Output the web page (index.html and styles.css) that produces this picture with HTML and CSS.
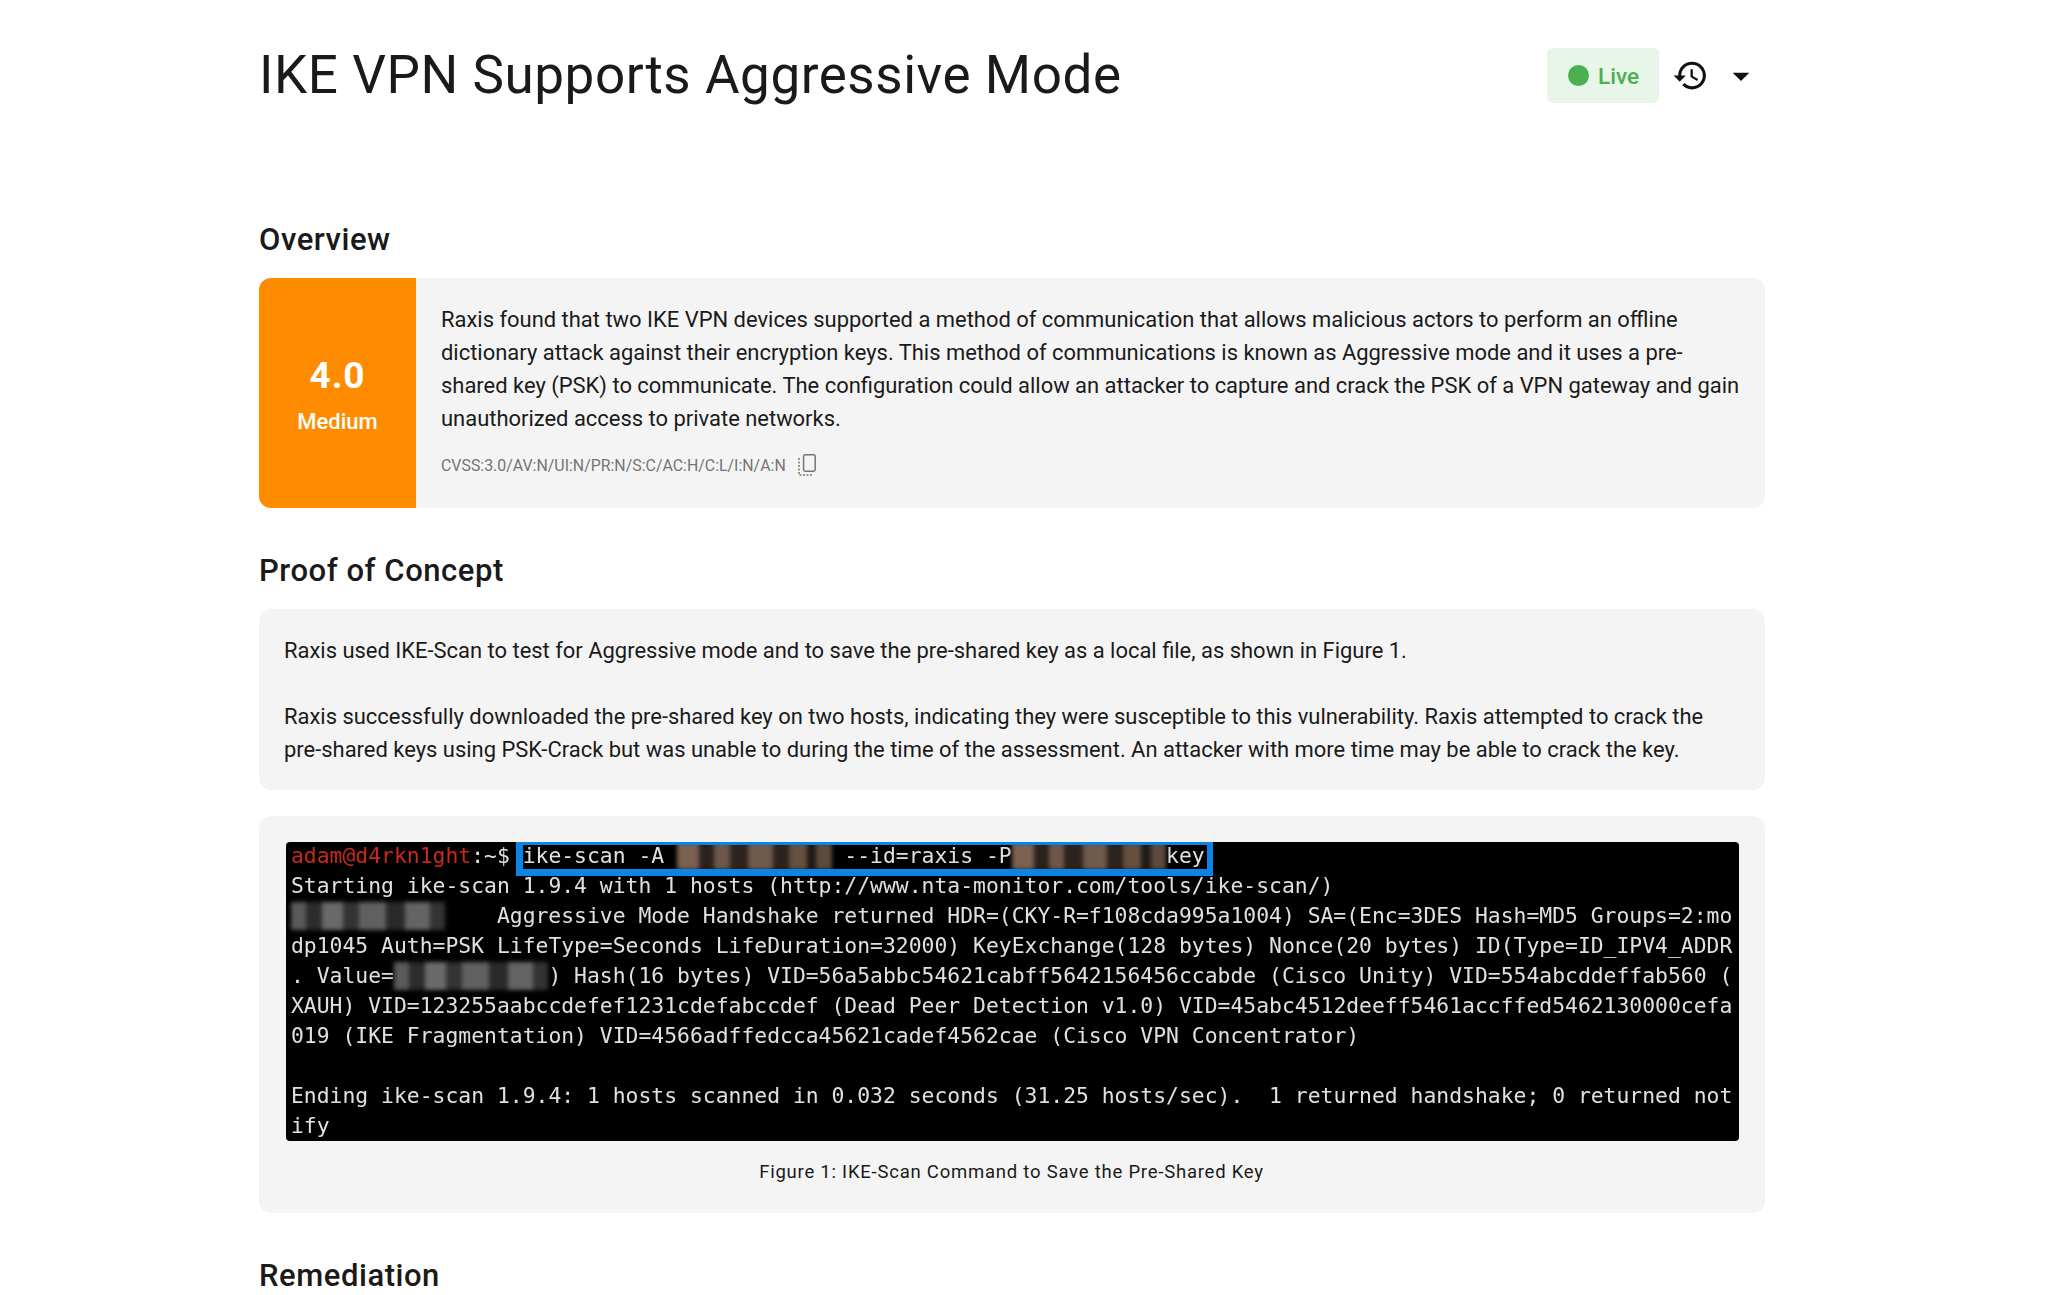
FILE: index.html
```html
<!DOCTYPE html>
<html lang="en">
<head>
<meta charset="utf-8">
<title>IKE VPN Supports Aggressive Mode</title>
<link rel="stylesheet" href="styles.css">
</head>
<body>
<main class="page">
  <header class="title-row">
    <h1 class="title">IKE VPN Supports Aggressive Mode</h1>
    <div class="actions">
      <div class="live"><span class="live-dot"></span>Live</div>
      <svg class="history" viewBox="0 0 24 24" aria-hidden="true"><path d="M13 3c-4.97 0-9 4.03-9 9H1l3.89 3.89.07.14L9 12H6c0-3.87 3.13-7 7-7s7 3.13 7 7-3.13 7-7 7c-1.93 0-3.68-.79-4.94-2.06l-1.42 1.42C8.27 19.99 10.51 21 13 21c4.97 0 9-4.03 9-9s-4.03-9-9-9zm-1 5v5l4.28 2.54.72-1.21-3.5-2.08V8H12z"/></svg>
      <svg class="caret" viewBox="0 0 24 24" aria-hidden="true"><path d="M7 10l5 5 5-5z"/></svg>
    </div>
  </header>

  <h2 class="heading heading-first">Overview</h2>
  <section class="card overview">
    <div class="score">
      <div class="score-value">4.0</div>
      <div class="score-label">Medium</div>
    </div>
    <div class="overview-body">
      <p class="text">Raxis found that two IKE VPN devices supported a method of communication that allows malicious actors to perform an offline dictionary attack against their encryption keys. This method of communications is known as Aggressive mode and it uses a pre-shared key (PSK) to communicate. The configuration could allow an attacker to capture and crack the PSK of a VPN gateway and gain unauthorized access to private networks.</p>
      <div class="cvss">
        <span>CVSS:3.0/AV:N/UI:N/PR:N/S:C/AC:H/C:L/I:N/A:N</span>
        <svg class="copy" viewBox="0 0 18 22" aria-hidden="true">
          <rect x="5.6" y="0.8" width="11.6" height="16.4" rx="1.6"/>
          <path class="dots" d="M1 4v17h14"/>
        </svg>
      </div>
    </div>
  </section>

  <h2 class="heading">Proof of Concept</h2>
  <section class="card poc">
    <p class="text">Raxis used IKE-Scan to test for Aggressive mode and to save the pre-shared key as a local file, as shown in Figure 1.</p>
    <p class="text para">Raxis successfully downloaded the pre-shared key on two hosts, indicating they were susceptible to this vulnerability. Raxis attempted to crack the pre-shared keys using PSK-Crack but was unable to during the time of the assessment. An attacker with more time may be able to crack the key.</p>
  </section>

  <section class="card figure">
    <div class="terminal">
      <div class="term-text">
<div class="line"><span class="prompt">adam@d4rkn1ght</span>:~$ ike-scan -A <span class="redact redact-warm"></span> --id=raxis -P<span class="redact redact-warm"></span>key</div>
<div class="line">Starting ike-scan 1.9.4 with 1 hosts (http://www.nta-monitor.com/tools/ike-scan/)</div>
<div class="line"><span class="redact redact-grey"></span>    Aggressive Mode Handshake returned HDR=(CKY-R=f108cda995a1004) SA=(Enc=3DES Hash=MD5 Groups=2:mo</div>
<div class="line">dp1045 Auth=PSK LifeType=Seconds LifeDuration=32000) KeyExchange(128 bytes) Nonce(20 bytes) ID(Type=ID_IPV4_ADDR</div>
<div class="line">. Value=<span class="redact redact-grey"></span>) Hash(16 bytes) VID=56a5abbc54621cabff5642156456ccabde (Cisco Unity) VID=554abcddeffab560 (</div>
<div class="line">XAUH) VID=123255aabccdefef1231cdefabccdef (Dead Peer Detection v1.0) VID=45abc4512deeff5461accffed5462130000cefa</div>
<div class="line">019 (IKE Fragmentation) VID=4566adffedcca45621cadef4562cae (Cisco VPN Concentrator)</div>
<div class="line"> </div>
<div class="line">Ending ike-scan 1.9.4: 1 hosts scanned in 0.032 seconds (31.25 hosts/sec).  1 returned handshake; 0 returned not</div>
<div class="line">ify</div>
      </div>
      <div class="highlight"></div>
    </div>
    <div class="caption">Figure 1: IKE-Scan Command to Save the Pre-Shared Key</div>
  </section>

  <h2 class="heading">Remediation</h2>
</main>
</body>
</html>
```

FILE: styles.css
```css
* { box-sizing: border-box; }
html, body { margin: 0; padding: 0; background: #fff; height: 1295px; overflow: hidden; }
body { font-family: Roboto, "Liberation Sans", sans-serif; color: #1a1a1a; }
.page { width: 1506px; margin-left: 259px; }

.title-row { display: flex; align-items: center; justify-content: space-between; height: 55px; margin-top: 48px; padding-right: 7px; }
.title { margin: 0; font-size: 53px; font-weight: 400; line-height: 55px; letter-spacing: 0.55px; white-space: nowrap; }
.actions { display: flex; align-items: center; }
.live { display: flex; align-items: center; gap: 9px; width: 112px; height: 55px; padding-left: 21px; border-radius: 6px; background: #e8f5e9; color: #4caf50; font-size: 22.5px; font-weight: 500; }
.live-dot { width: 21px; height: 21px; border-radius: 50%; background: #4caf50; }
.history { width: 37px; height: 37px; margin-left: 13px; fill: #111; }
.caret { width: 40px; height: 40px; margin-left: 12px; margin-right: -3px; fill: #111; }

.heading { margin: 43px 0 18px; font-size: 31px; font-weight: 500; line-height: 40px; letter-spacing: 0.55px; }
.heading-first { margin-top: 117px; }

.card { background: #f4f4f4; border-radius: 12px; }
.text { margin: 0; font-size: 21.95px; line-height: 33px; }

.overview { display: flex; height: 230px; overflow: hidden; }
.score { display: flex; flex-direction: column; align-items: center; width: 157px; flex: none; padding-top: 74px; background: #ff8c00; color: #fff; }
.score-value { font-size: 37px; font-weight: 700; line-height: 48px; letter-spacing: 1px; }
.score-label { margin-top: 7px; font-size: 22px; font-weight: 500; line-height: 30px; }
.overview-body { flex: 1; padding: 25px 20px 0 25px; }
.cvss { display: flex; align-items: center; gap: 12px; height: 30px; margin-top: 15px; font-size: 15.9px; color: #757575; }
.copy { width: 18px; height: 22px; fill: none; stroke: #757575; stroke-width: 1.5; }
.dots { stroke-dasharray: 2 1.5; }

.poc { height: 181px; padding: 25px; }
.para { margin-top: 33px; }

.figure { height: 397px; margin-top: 26px; padding: 26px 26px 0 27px; }
.terminal { position: relative; height: 299px; overflow: hidden; border-radius: 4px; background: #000; }
.term-text { margin-top: -1px; padding-left: 5px; font-family: "DejaVu Sans Mono", "Liberation Mono", monospace; font-size: 21.38px; line-height: 30px; color: #e0e0e0; filter: blur(0.7px); }
.line { height: 30px; white-space: pre; }
.prompt { color: #c9281f; }
.redact { display: inline-block; width: 12ch; height: 28px; vertical-align: -7px; filter: blur(2px); }
.redact-warm { background: linear-gradient(90deg, #7a6150 0 14%, #2a211d 14% 24%, #6e5748 24% 34%, #2c231f 34% 46%, #705a4b 46% 62%, #2a221e 62% 72%, #66503f 72% 84%, #1f1a17 84% 90%, #5d4a3d 90%); }
.redact-grey { background: linear-gradient(90deg, #5a5a5a 0 10%, #2c2c2c 10% 20%, #6a6a6a 20% 34%, #333 34% 44%, #606060 44% 62%, #2a2a2a 62% 74%, #646464 74% 90%, #333 90%); }
.highlight { position: absolute; left: 230px; top: 0; width: 697px; height: 34px; border: solid #0a84e6; border-width: 3px 6px 7px 7px; }
.caption { margin-top: 16px; padding-right: 2px; font-size: 18.5px; line-height: 30px; letter-spacing: 0.77px; text-align: center; }
```
